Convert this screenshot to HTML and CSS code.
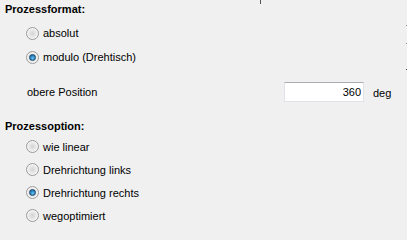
FILE: index.html
```html
<!DOCTYPE html>
<html lang="de">
<head>
    <meta charset="UTF-8">
    <title>Prozessformat</title>
    <link rel="stylesheet" href="styles.css">
</head>
<body>
    <div class="panel">
        <div class="group-title">Prozessformat:</div>
        <label class="option"><input type="radio" name="format"> absolut</label>
        <label class="option"><input type="radio" name="format" checked> modulo (Drehtisch)</label>

        <div class="position-row">
            <span class="position-label">obere Position</span>
            <input type="text" class="number-box" value="360">
            <span class="unit">deg</span>
        </div>

        <div class="group-title second">Prozessoption:</div>
        <label class="option small"><input type="radio" name="option"> wie linear</label>
        <label class="option small"><input type="radio" name="option"> Drehrichtung links</label>
        <label class="option small"><input type="radio" name="option" checked> Drehrichtung rechts</label>
        <label class="option small"><input type="radio" name="option"> wegoptimiert</label>

        <span class="tick tick-top"></span>
        <span class="tick tick-a"></span>
        <span class="tick tick-b"></span>
        <span class="tick tick-c"></span>
    </div>
</body>
</html>
```

FILE: styles.css
```css
body {
    margin: 0;
    background-color: #f0f0f0;
    font-family: "Liberation Sans", Arial, sans-serif;
    font-size: 11px;
    color: #000;
}
.panel {
    position: relative;
    width: 407px;
    height: 240px;
    overflow: hidden;
}
.group-title {
    font-weight: bold;
    line-height: 18px;
    padding-left: 5px;
    margin-bottom: 3px;
}
.group-title.second {
    margin-top: 15px;
    margin-bottom: 0;
}
.option {
    display: flex;
    align-items: center;
    height: 24px;
    padding-left: 26px;
}
.option.small {
    height: 23px;
}
.option input[type="radio"] {
    appearance: none;
    -webkit-appearance: none;
    width: 13px;
    height: 13px;
    margin: 0 4px 0 0;
    border-radius: 50%;
    border: 1px solid #9a9a9a;
    background: radial-gradient(circle at 50% 50%, #d4d4d4 0, #e8e8e8 45%, #fbfbfb 100%);
    box-shadow: inset 0 0 0 1px #f4f4f4;
    box-sizing: border-box;
    position: relative;
}
.option input[type="radio"]:checked::after {
    content: "";
    position: absolute;
    left: 2px;
    top: 2px;
    width: 7px;
    height: 7px;
    border-radius: 50%;
    box-sizing: border-box;
    border: 1px solid #1b4a6e;
    background: radial-gradient(circle at 55% 65%, #6cc6f2 0, #2a83c0 55%, #154d7a 100%);
}
.position-row {
    display: flex;
    align-items: center;
    height: 20px;
    margin-top: 13px;
}
.position-label {
    width: 284px;
    padding-left: 27px;
    box-sizing: border-box;
}
.number-box {
    width: 80px;
    height: 20px;
    box-sizing: border-box;
    margin: 0;
    padding: 0 2px 0 0;
    border: 1px solid #dfe3e8;
    border-top-color: #abadb3;
    background-color: #fff;
    font-family: "Liberation Sans", Arial, sans-serif;
    font-size: 11px;
    text-align: right;
    color: #000;
}
.unit {
    margin-left: 9px;
    padding-top: 1px;
}
.tick {
    position: absolute;
    width: 1px;
    background-color: #8a8a8a;
}
.tick-top {
    left: 260px;
    top: 0;
    height: 4px;
    background-color: #555;
}
.tick-a {
    left: 406px;
    top: 25px;
    height: 1px;
}
.tick-b {
    left: 406px;
    top: 43px;
    height: 1px;
}
.tick-c {
    left: 406px;
    top: 69px;
    height: 1px;
    background-color: #444;
}
```
